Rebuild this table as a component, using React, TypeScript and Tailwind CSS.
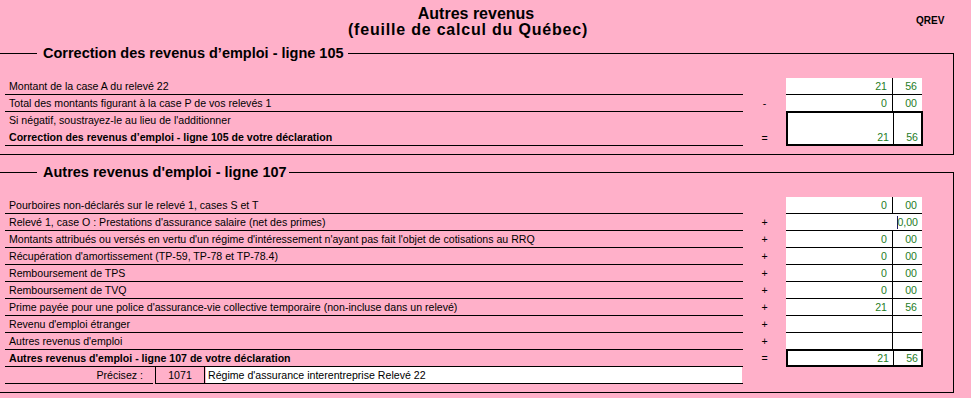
// App.tsx
// Autres revenus – feuille de calcul du Québec (QREV)

import React from 'react';

interface AmountProps {
  whole?: string;
  cents?: string;
}

interface RowProps extends AmountProps {
  label: string;
  op?: string;
  bold?: boolean;
  editing?: string;
}

const green = 'text-[#1f7d1f]';

/** White two-part amount field (dollars | cents) */
function Amount({ whole = '', cents = '' }: AmountProps) {
  return (
    <div className="flex h-[17px] w-[136px] border-b border-black bg-white leading-[16px]">
      <div className={`w-[106px] pr-[5px] text-right ${green}`}>{whole}</div>
      <div className={`w-[30px] border-l border-black pr-[5px] text-right ${green}`}>{cents}</div>
    </div>
  );
}

/** Field currently being edited: no split, caret before the value */
function EditingAmount({ value }: { value: string }) {
  return (
    <div className="flex h-[17px] w-[136px] items-center justify-end border-b border-black bg-white pr-[4px] leading-[16px]">
      <span className="h-[13px] w-px bg-[#1a1a60]" />
      <span className={`-ml-px ${green}`}>{value}</span>
    </div>
  );
}

/** Thick-bordered total box */
function TotalBox({ whole, cents, tall = false }: AmountProps & { tall?: boolean }) {
  return (
    <div
      className={`-mt-px flex w-[137px] border-2 border-black bg-white leading-[13px] ${
        tall ? 'h-[35px]' : 'h-[18px]'
      }`}
    >
      <div className={`flex h-full w-[105px] items-end justify-end pr-[4px] ${green}`}>{whole}</div>
      <div className={`flex h-full flex-1 items-end justify-end border-l border-black pr-[3px] ${green}`}>{cents}</div>
    </div>
  );
}

function Label({ children, bold = false, border = true }: { children: React.ReactNode; bold?: boolean; border?: boolean }) {
  return (
    <div
      className={`ml-[5px] h-[17px] w-[738px] whitespace-nowrap pl-[4px] leading-[16px] ${
        border ? 'border-b border-black' : ''
      } ${bold ? 'font-bold' : ''}`}
    >
      {children}
    </div>
  );
}

function Row({ label, op = '', bold = false, whole, cents, editing }: RowProps) {
  return (
    <div className="flex h-[17px]">
      <Label bold={bold}>{label}</Label>
      <div className="w-[43px] text-center leading-[16px]">{op}</div>
      {editing !== undefined ? <EditingAmount value={editing} /> : <Amount whole={whole} cents={cents} />}
    </div>
  );
}

function Section({ title, tight = false, children }: { title: string; tight?: boolean; children: React.ReactNode }) {
  return (
    <fieldset className="w-[954px] border border-l-0 border-black pb-[8px] pt-[17px]">
      <legend
        className={`ml-[37px] pl-[6px] text-[14.5px] font-bold leading-[16px] ${tight ? 'pr-[2px]' : 'pr-[4px]'}`}
      >
        {title}
      </legend>
      {children}
    </fieldset>
  );
}

const otherRows: RowProps[] = [
  { label: 'Pourboires non-déclarés sur le relevé 1, cases S et T', whole: '0', cents: '00' },
  { label: "Relevé 1, case O : Prestations d'assurance salaire (net des primes)", op: '+', editing: '0,00' },
  {
    label: "Montants attribués ou versés en vertu d'un régime d'intéressement n'ayant pas fait l'objet de cotisations au RRQ",
    op: '+',
    whole: '0',
    cents: '00',
  },
  { label: "Récupération d'amortissement (TP-59, TP-78 et TP-78.4)", op: '+', whole: '0', cents: '00' },
  { label: 'Remboursement de TPS', op: '+', whole: '0', cents: '00' },
  { label: 'Remboursement de TVQ', op: '+', whole: '0', cents: '00' },
  {
    label: "Prime payée pour une police d'assurance-vie collective temporaire (non-incluse dans un relevé)",
    op: '+',
    whole: '21',
    cents: '56',
  },
  { label: "Revenu d'emploi étranger", op: '+' },
  { label: "Autres revenus d'emploi", op: '+' },
];

export default function App() {
  return (
    <div className="h-[398px] w-[971px] overflow-hidden bg-[#ffb0c9] text-[10.6px] text-black [font-family:'Liberation_Sans',Arial,sans-serif]">
      {/* Header */}
      <div className="flex h-[45px]">
        <div className="ml-[46px] w-[860px] pt-[6px] text-center text-[16px] font-bold leading-[16px]">
          <div>Autres revenus</div>
          <div className="pr-[16px] tracking-[0.8px]">(feuille de calcul du Québec)</div>
        </div>
        <div className="ml-[10px] pt-[13px] text-[10px] font-bold">QREV</div>
      </div>

      {/* Ligne 105 */}
      <Section title="Correction des revenus d’emploi - ligne 105">
        <Row label="Montant de la case A du relevé 22" whole="21" cents="56" />
        <Row label="Total des montants figurant à la case P de vos relevés 1" op="-" whole="0" cents="00" />
        <div className="flex">
          <div>
            <Label border={false}>Si négatif, soustrayez-le au lieu de l'additionner</Label>
            <Label bold>Correction des revenus d’emploi - ligne 105 de votre déclaration</Label>
          </div>
          <div className="flex h-[34px] w-[43px] items-end justify-center leading-[16px]">=</div>
          <TotalBox whole="21" cents="56" tall />
        </div>
      </Section>

      {/* Ligne 107 */}
      <div className="mt-[9px]">
        <Section title="Autres revenus d'emploi - ligne 107" tight>
          {otherRows.map((row, i) => (
            <Row key={i} {...row} />
          ))}
          <div className="flex h-[17px]">
            <Label bold>Autres revenus d'emploi - ligne 107 de votre déclaration</Label>
            <div className="w-[43px] text-center leading-[16px]">=</div>
            <TotalBox whole="21" cents="56" />
          </div>
          <div className="flex h-[17px] leading-[16px]">
            <div className="ml-[5px] w-[148px] border-b border-black pr-[10px] text-right">Précisez :</div>
            <div className="ml-[2px] w-[50px] border-x border-b border-black text-center">1071</div>
            <div className="w-[538px] border-b border-black pl-px">
              <div className="h-[16px] w-[536px] bg-white pl-[2px]">Régime d'assurance interentreprise Relevé 22</div>
            </div>
          </div>
        </Section>
      </div>
    </div>
  );
}
